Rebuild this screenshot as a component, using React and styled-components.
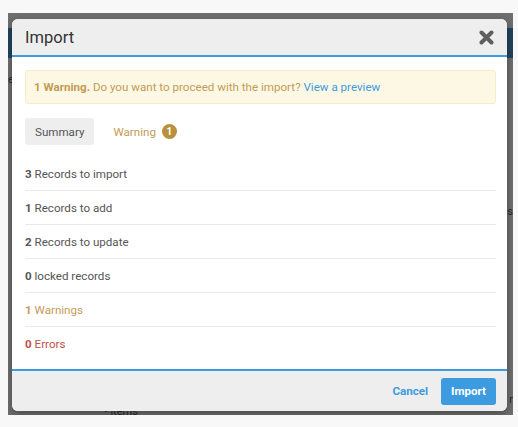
import React from 'react'
import styled, { createGlobalStyle } from 'styled-components'

const GlobalStyle = createGlobalStyle`
  html, body {
    margin: 0;
    padding: 0;
    background: #f8f8f8;
  }
  body {
    font-family: Roboto, "Noto Sans", Arial, sans-serif;
    color: #555;
  }
`;

const summary = [
    { count: 3, label: 'Records to import' },
    { count: 1, label: 'Records to add' },
    { count: 2, label: 'Records to update' },
    { count: 0, label: 'locked records' },
    { count: 1, label: 'Warnings', tone: 'warning' },
    { count: 0, label: 'Errors', tone: 'error' },
];

const toneColors = {
    warning: '#c49b58',
    error: '#c14f4c',
};

export default function App() {
    return (
        <>
            <GlobalStyle />
            <Page>
                <Backdrop>
                    {/* page content showing through the overlay */}
                    <NavStrip />
                    <StrayText $top={60} $left={0}>e</StrayText>
                    <StrayText $top={192} $right={0}>s</StrayText>
                    <StrayText $top={380} $right={0}>r</StrayText>
                    <BulletItem>• items</BulletItem>

                    <Dialog>
                        <Header>
                            <Title>Import</Title>
                            <CloseButton aria-label="close">
                                <svg width="15" height="15" viewBox="0 0 15 15">
                                    <path d="M2.5 2.5 L12.5 12.5 M12.5 2.5 L2.5 12.5" stroke="#5f5f5f" strokeWidth="4" strokeLinecap="round" />
                                </svg>
                            </CloseButton>
                        </Header>

                        <Body>
                            <Alert>
                                <span>
                                    <strong>1 Warning.</strong> Do you want to proceed with the import? <Link>View a preview</Link>
                                </span>
                            </Alert>

                            <Tabs>
                                <Tab $active>Summary</Tab>
                                <Tab $tone="warning">
                                    Warning <Badge>1</Badge>
                                </Tab>
                            </Tabs>

                            <List>
                                {summary.map((row) => (
                                    <Row key={row.label} $tone={row.tone}>
                                        <span>
                                            <Count>{row.count}</Count> {row.label}
                                        </span>
                                    </Row>
                                ))}
                            </List>
                        </Body>

                        <Footer>
                            <LinkButton>Cancel</LinkButton>
                            <PrimaryButton>Import</PrimaryButton>
                        </Footer>
                    </Dialog>
                </Backdrop>
            </Page>
        </>
    );
}

const Page = styled.div`
  width: 518px;
  height: 427px;
  box-sizing: border-box;
  padding: 13px 5px 12px 8px;
`;

const Backdrop = styled.div`
  position: relative;
  height: 100%;
  box-sizing: border-box;
  padding: 6px 6px 4px 4px;
  background: #6f6f6f;
  overflow: hidden;
`;

const NavStrip = styled.div`
  position: absolute;
  top: 15px;
  left: 0;
  right: 0;
  height: 30px;
  background: #22445d;
`;

const StrayText = styled.span`
  position: absolute;
  top: ${(p) => p.$top}px;
  ${(p) => (p.$left !== undefined ? `left: ${p.$left}px;` : '')}
  ${(p) => (p.$right !== undefined ? `right: ${p.$right}px;` : '')}
  font-size: 11px;
  color: #2c2c2c;
`;

const BulletItem = styled.span`
  position: absolute;
  left: 96px;
  bottom: -3px;
  font-size: 11px;
  line-height: 12px;
  color: #2a2a2a;
`;

const Dialog = styled.div`
  position: relative;
  height: 100%;
  display: flex;
  flex-direction: column;
  background: #fff;
  border-radius: 6px;
  overflow: hidden;
  box-shadow: 0 3px 8px rgba(0, 0, 0, 0.35);
`;

const Header = styled.div`
  display: flex;
  align-items: center;
  justify-content: space-between;
  height: 36px;
  padding: 0 13px;
  background: #eeeeee;
  border-bottom: 2px solid #3d9be0;
`;

const Title = styled.h3`
  margin: 0;
  font-size: 16.5px;
  font-weight: 400;
  color: #333;
`;

const CloseButton = styled.span`
  display: flex;
  margin-top: 1px;
`;

const Body = styled.div`
  flex: 1;
  padding: 13px 11px 0 13px;
`;

const Alert = styled.div`
  height: 34px;
  box-sizing: border-box;
  display: flex;
  align-items: center;
  padding: 0 8px;
  background: #fcf8e3;
  border: 1px solid #f6ecc8;
  border-radius: 3px;
  font-size: 11.6px;
  color: #c49b58;
  white-space: pre;

  strong {
    font-weight: 700;
  }
`;

const Link = styled.span`
  color: #3d9be0;
`;

const Tabs = styled.div`
  display: flex;
  align-items: center;
  margin-top: 14px;
`;

const Tab = styled.div`
  display: flex;
  align-items: center;
  gap: 6px;
  height: 27px;
  padding: 0 10px;
  margin-right: 9px;
  border-radius: 3px;
  font-size: 11.6px;
  background: ${(p) => (p.$active ? '#eeeeee' : 'transparent')};
  color: ${(p) => (p.$tone ? toneColors[p.$tone] : '#555')};
`;

const Badge = styled.span`
  display: inline-flex;
  align-items: center;
  justify-content: center;
  width: 15px;
  height: 15px;
  border-radius: 50%;
  background: #b8913f;
  color: #fff;
  font-size: 10px;
  font-weight: 700;
`;

const List = styled.div`
  margin-top: 12px;
`;

const Row = styled.div`
  height: 34px;
  box-sizing: border-box;
  display: flex;
  align-items: center;
  font-size: 11.6px;
  color: ${(p) => (p.$tone ? toneColors[p.$tone] : '#555')};
  border-bottom: 1px solid #e9e9e9;
  white-space: pre;

  &:last-child {
    border-bottom: none;
  }
`;

const Count = styled.span`
  font-weight: 700;
`;

const Footer = styled.div`
  display: flex;
  align-items: center;
  justify-content: flex-end;
  gap: 13px;
  height: 40px;
  padding: 0 11px;
  background: #eeeeee;
  border-top: 2px solid #3d9be0;
`;

const LinkButton = styled.span`
  font-size: 11.6px;
  font-weight: 700;
  color: #3d9be0;
`;

const PrimaryButton = styled.button`
  height: 27px;
  padding: 0 10px;
  border: none;
  border-radius: 3px;
  background: #3d9be0;
  color: #fff;
  font-family: inherit;
  font-size: 11.6px;
  font-weight: 700;
`;
